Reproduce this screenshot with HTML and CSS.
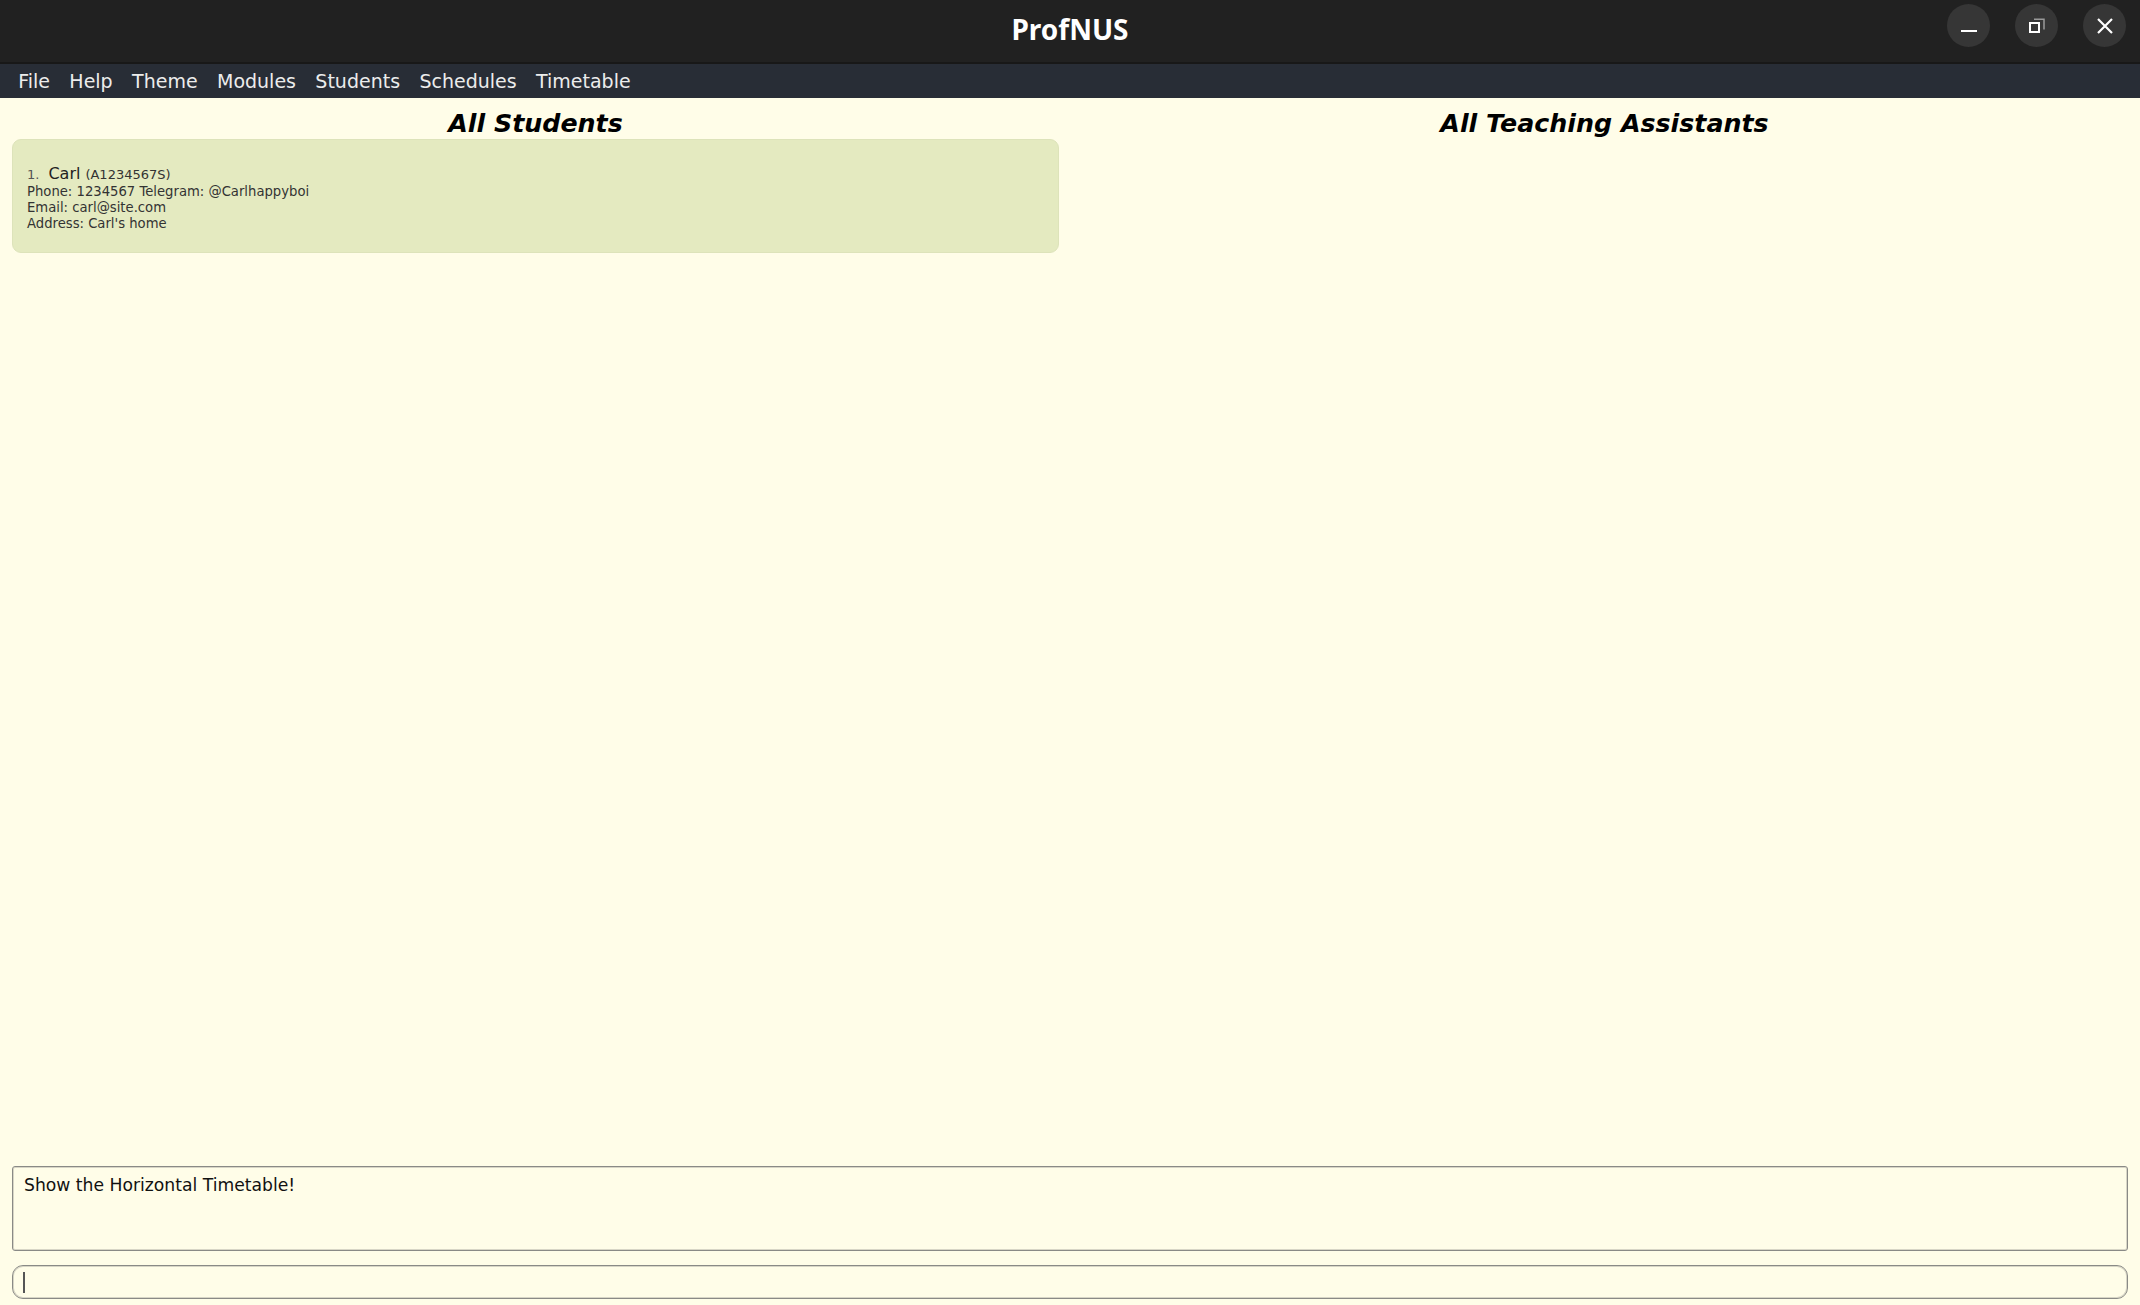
FILE: index.html
```html
<!DOCTYPE html>
<html>
<head>
<meta charset="utf-8">
<title>ProfNUS</title>
<link rel="stylesheet" href="styles.css">
</head>
<body>
<div class="window">
  <header class="titlebar">
    <div class="title">ProfNUS</div>
    <div class="controls">
      <button class="ctl" aria-label="Minimize">
        <svg width="16" height="16" viewBox="0 0 16 16"><rect x="0" y="12" width="16" height="2" fill="#fff"/></svg>
      </button>
      <button class="ctl" aria-label="Restore">
        <svg width="16" height="16" viewBox="0 0 16 16"><path d="M5 1.2 H15 V11.5" fill="none" stroke="#9a9a9a" stroke-width="1.5"/><rect x="1" y="5" width="9" height="9" fill="none" stroke="#fff" stroke-width="2"/></svg>
      </button>
      <button class="ctl" aria-label="Close">
        <svg width="16" height="16" viewBox="0 0 16 16"><path d="M1 1 L15 15 M15 1 L1 15" stroke="#fff" stroke-width="2.2"/></svg>
      </button>
    </div>
  </header>
  <nav class="menubar">
    <span class="menu-item">File</span>
    <span class="menu-item">Help</span>
    <span class="menu-item">Theme</span>
    <span class="menu-item">Modules</span>
    <span class="menu-item">Students</span>
    <span class="menu-item">Schedules</span>
    <span class="menu-item">Timetable</span>
  </nav>
  <main class="content">
    <div class="columns">
      <section class="column">
        <h2 class="col-title">All Students</h2>
        <div class="list">
          <div class="card">
            <div class="name-line"><span class="idx">1.</span><span class="name">Carl</span><span class="sid">(A1234567S)</span></div>
            <div class="detail">Phone: 1234567 Telegram: @Carlhappyboi</div>
            <div class="detail">Email: carl@site.com</div>
            <div class="detail">Address: Carl's home</div>
          </div>
        </div>
      </section>
      <section class="column">
        <h2 class="col-title">All Teaching Assistants</h2>
        <div class="list"></div>
      </section>
    </div>
    <div class="result">Show the Horizontal Timetable!</div>
    <div class="command"><span class="caret"></span></div>
  </main>
</div>
</body>
</html>
```

FILE: styles.css
```css
* { box-sizing: border-box; }
html, body { margin: 0; padding: 0; }
body {
  width: 2140px;
  height: 1305px;
  overflow: hidden;
  font-family: "DejaVu Sans", sans-serif;
  background: #fffde8;
}
.window {
  display: flex;
  flex-direction: column;
  height: 1305px;
}
.titlebar {
  height: 64px;
  background: #212121;
  border-bottom: 2px solid #181818;
  display: flex;
  align-items: center;
  justify-content: center;
  position: relative;
  flex: none;
}
.title {
  font-family: "Noto Sans", sans-serif;
  font-weight: 700;
  font-size: 28px;
  color: #ffffff;
  margin-top: -4px;
}
.controls {
  position: absolute;
  right: 14px;
  top: 4px;
  display: flex;
  gap: 25px;
}
.ctl {
  width: 43px;
  height: 43px;
  border-radius: 50%;
  background: #363636;
  border: none;
  padding: 0;
  display: flex;
  align-items: center;
  justify-content: center;
}
.menubar {
  height: 34px;
  background: #282d36;
  display: flex;
  align-items: center;
  padding-left: 8.5px;
  flex: none;
}
.menu-item {
  color: #ececec;
  font-size: 19px;
  padding: 0 9.7px;
  line-height: 34px;
}
.content {
  flex: 1;
  display: flex;
  flex-direction: column;
  padding: 0 12px 6px 12px;
  min-height: 0;
}
.columns {
  flex: 1;
  display: grid;
  grid-template-columns: 1047px 1047px;
  column-gap: 22px;
  min-height: 0;
}
.column {
  display: flex;
  flex-direction: column;
}
.col-title {
  margin: 0;
  height: 41px;
  padding-top: 11px;
  line-height: 29px;
  text-align: center;
  font-size: 25.3px;
  font-weight: 700;
  font-style: italic;
  color: #000;
}
.card {
  background: #e4eac0;
  border: 1px solid #dde3ba;
  border-radius: 9px;
  height: 114px;
  padding: 25px 14px 0 14px;
  color: #333;
}
.name-line {
  display: flex;
  align-items: baseline;
  line-height: 18px;
}
.idx { font-size: 13px; color: #555; margin-right: 9px; }
.name { font-size: 16px; color: #222; margin-right: 5px; }
.sid { font-size: 13px; color: #333; }
.detail {
  font-size: 13.2px;
  line-height: 16px;
  color: #333;
}
.result {
  margin-top: 14px;
  height: 85px;
  border: 1px solid #8a8a86;
  border-radius: 3px;
  box-shadow: inset 0 0 0 1px #d8d6c6;
  padding: 8px 11px;
  font-size: 17.2px;
  color: #111;
  flex: none;
}
.command {
  margin-top: 14px;
  height: 34px;
  border: 1px solid #8a8a86;
  border-radius: 11px;
  box-shadow: inset 0 0 0 1px #d8d6c6;
  padding: 6px 10px;
  flex: none;
  display: flex;
  align-items: center;
}
.caret {
  width: 2px;
  height: 21px;
  background: #555;
}
```
